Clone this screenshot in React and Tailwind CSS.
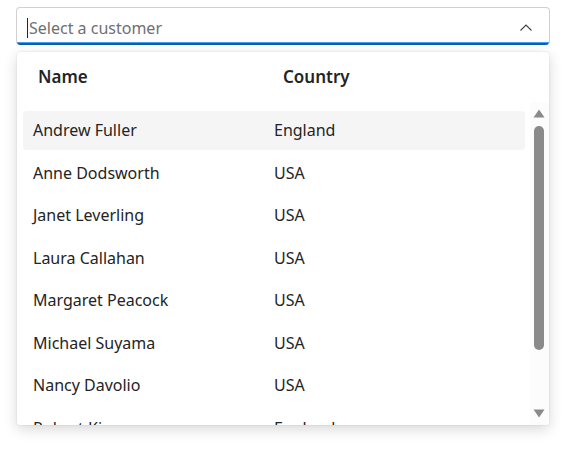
import React from "react";

const rows = [
  ["Andrew Fuller", "England"],
  ["Anne Dodsworth", "USA"],
  ["Janet Leverling", "USA"],
  ["Laura Callahan", "USA"],
  ["Margaret Peacock", "USA"],
  ["Michael Suyama", "USA"],
  ["Nancy Davolio", "USA"],
  ["Robert King", "England"],
];

export default function App() {
  return (
    <div className="w-[572px] h-[458px] bg-white relative" style={{ fontFamily: '"Noto Sans", "Open Sans", sans-serif' }}>
      <div className="pt-[7px] pl-[16px] w-[550px]">
        <div className="h-[38px] border border-[#d1d1d1] rounded-[4px] border-b-0 flex items-center pt-[2px] pl-[10px] pr-[16px] relative overflow-hidden">
          <span className="w-px h-[20px] bg-[#242424] mr-px"></span>
          <span className="text-[16px] text-[#707070] leading-none">Select a customer</span>
          <svg className="ml-auto" width="14" height="10" viewBox="0 0 14 10">
            <path d="M1.5 7.5 L7 2 L12.5 7.5" fill="none" stroke="#424242" strokeWidth="1.1" />
          </svg>
          <div className="absolute left-0 right-0 bottom-0 h-[3px] bg-[#115ea3] border-t border-[#479ef5]"></div>
        </div>
      </div>
      <div className="ml-[17px] mt-[7px] w-[532px] h-[373px] rounded-[3px] bg-white shadow-[0_4px_14px_rgba(0,0,0,0.16),0_0_2px_rgba(0,0,0,0.12)] overflow-hidden flex flex-col">
        <div className="h-[50px] flex items-center pl-[21px] text-[17px] font-semibold text-[#242424] shrink-0">
          <span className="w-[245px]">Name</span>
          <span>Country</span>
        </div>
        <div className="flex flex-1 min-h-0">
          <div className="flex-1 pl-[6px] pr-[5px] pt-[7px]">
            {rows.map(([n, c], i) => (
              <div key={n} className="h-[42.5px] py-[2px]">
                <div className={`h-full rounded-[4px] flex items-center pl-[10px] text-[16px] text-[#242424] ${i === 0 ? "bg-[#f5f5f5]" : ""}`}>
                  <span className="w-[241px]">{n}</span>
                  <span>{c}</span>
                </div>
              </div>
            ))}
          </div>
          <div className="w-[19px] bg-[#fcfcfc] flex flex-col items-center pt-[7px] pr-[2px]">
            <svg width="12" height="9" viewBox="0 0 12 9">
              <path d="M6 0.5 L11.5 8.5 L0.5 8.5 Z" fill="#8a8a8a" />
            </svg>
            <div className="w-[10px] h-[224px] bg-[#8a8a8a] rounded-full mt-[8px]"></div>
            <svg width="12" height="9" viewBox="0 0 12 9" className="mt-[59px]">
              <path d="M0.5 0.5 L11.5 0.5 L6 8.5 Z" fill="#8a8a8a" />
            </svg>
          </div>
        </div>
      </div>
    </div>
  );
}
